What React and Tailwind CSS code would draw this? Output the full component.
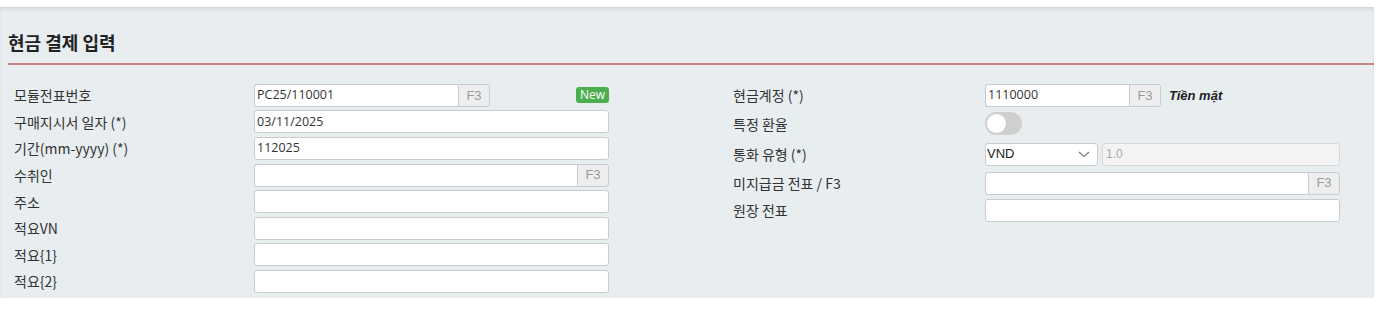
import React from "react";

const kr = { fontFamily: '"Noto Sans CJK KR", "Noto Sans", sans-serif' };

// plain text box, optional F3 lookup button on the right
function Field({ value = "", f3 = false, width = "w-[355px]" }) {
  return (
    <div className={`flex h-[23px] ${width}`}>
      <div
        className={`flex-1 bg-white border border-[#c9cccf] ${f3 ? "rounded-l-[3px] border-r-0" : "rounded-[3px]"} flex items-center pl-[2px] text-[12.5px] text-[#333]`}
        style={{ fontFamily: '"Open Sans", "Noto Sans", sans-serif' }}
      >
        {value}
      </div>
      {f3 && (
        <div
          className="w-[32px] bg-[#eeeeee] border border-[#c9cccf] rounded-r-[3px] flex items-center justify-center text-[13px] text-[#9a9a9a]"
          style={{ fontFamily: '"Liberation Sans", Arial, sans-serif' }}
        >
          F3
        </div>
      )}
    </div>
  );
}

function Row({ label, h = "h-[26.6px]", labelW = "w-[240px]", children }) {
  return (
    <div className={`flex items-center ${h}`}>
      <div className={`${labelW} text-[14px] text-[#333] leading-none`} style={kr}>
        {label}
      </div>
      {children}
    </div>
  );
}

export default function App() {
  const leftRows = ["구매지시서 일자 (*)", "기간(mm-yyyy) (*)", "수취인", "주소", "적요VN", "적요{1}", "적요{2}"];
  const leftValues = ["03/11/2025", "112025", "", "", "", "", ""];

  return (
    <div className="bg-white w-[1381px] h-[314px] pt-[7px]">
      <div className="w-[1374px] h-[291px] bg-[#e8edf0] border-t border-[#d3d8db] shadow-[inset_0_2px_3px_rgba(0,0,0,0.07)] pl-[8px]">
        <div className="pt-[22px] pb-[9px] text-[18px] font-bold text-[#222] leading-[24px]" style={kr}>
          현금 결제 입력
        </div>
        <div className="h-[2px] bg-[#c98585]" />

        <div className="flex pt-[17px] pl-[6px]">
          {/* left column */}
          <div className="w-[719px]">
            <Row label="모듈전표번호">
              <div className="w-[355px] flex items-center justify-between">
                <Field value="PC25/110001" f3 width="w-[236px]" />
                <span
                  className="bg-[#4cae4c] text-white text-[12px] px-[4px] h-[16px] leading-[16px] rounded-[3px]"
                  style={{ fontFamily: '"Open Sans", sans-serif' }}
                >
                  New
                </span>
              </div>
            </Row>
            {leftRows.map((l, i) => (
              <Row key={l} label={l}>
                <Field value={leftValues[i]} f3={l === "수취인"} />
              </Row>
            ))}
          </div>

          {/* right column */}
          <div>
            <Row label="현금계정 (*)" labelW="w-[252px]">
              <Field value="1110000" f3 width="w-[176px]" />
              <span
                className="ml-[8px] text-[13px] font-bold italic text-[#222]"
                style={{ fontFamily: '"Liberation Sans", Arial, sans-serif' }}
              >
                Tiền mặt
              </span>
            </Row>
            <Row label="특정 환율" labelW="w-[252px]" h="h-[30px]">
              <div className="w-[37px] h-[23px] rounded-full bg-[#cfcfcf] flex items-center pl-[2px]">
                <div className="w-[19px] h-[19px] rounded-full bg-white" />
              </div>
            </Row>
            <Row label="통화 유형 (*)" labelW="w-[252px]" h="h-[31px]">
              <div
                className="w-[113px] h-[23px] bg-white border border-[#c9cccf] rounded-[3px] flex items-center justify-between pl-[1px] pr-[7px] text-[13px] text-[#222]"
                style={{ fontFamily: '"Liberation Sans", Arial, sans-serif' }}
              >
                VND
                <svg width="12" height="7" viewBox="0 0 12 7" fill="none">
                  <path d="M1 1l5 4.5L11 1" stroke="#777" strokeWidth="1.1" />
                </svg>
              </div>
              <div
                className="ml-[4px] w-[238px] h-[23px] bg-[#f3f3f3] border border-[#d6d9dc] rounded-[3px] flex items-center pl-[3px] text-[12px] text-[#aaa]"
                style={{ fontFamily: '"Liberation Sans", Arial, sans-serif' }}
              >
                1.0
              </div>
            </Row>
            <Row label="미지급금 전표 / F3" labelW="w-[252px]" h="h-[27px]">
              <Field f3 />
            </Row>
            <Row label="원장 전표" labelW="w-[252px]" h="h-[27px]">
              <Field />
            </Row>
          </div>
        </div>
      </div>
    </div>
  );
}
